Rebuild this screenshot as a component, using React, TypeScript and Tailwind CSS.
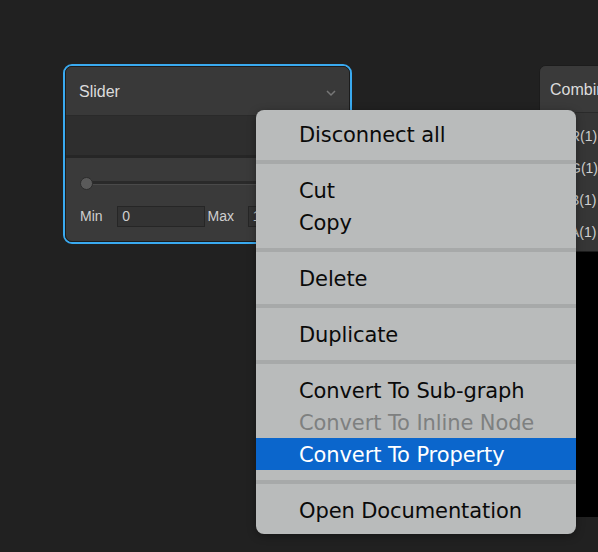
import React from 'react';

type MenuItem = { label: string; disabled?: boolean; active?: boolean };

const groups: MenuItem[][] = [
  [{ label: 'Disconnect all' }],
  [{ label: 'Cut' }, { label: 'Copy' }],
  [{ label: 'Delete' }],
  [{ label: 'Duplicate' }],
  [
    { label: 'Convert To Sub-graph' },
    { label: 'Convert To Inline Node', disabled: true },
    { label: 'Convert To Property', active: true },
  ],
  [{ label: 'Open Documentation' }],
];

const SliderNode: React.FC = () => (
  <div className="absolute left-[63px] top-[64px] w-[289px] h-[180px] rounded-[9px] border-2 border-[#3aaaf0]">
    <div className="w-full h-full rounded-[7px] border border-[#1c1c1c] bg-[#3a3a3a] overflow-hidden flex flex-col">
      <div className="h-[49px] bg-[#393939] flex items-center justify-between pl-[13px] pr-[12px] border-b border-[#2a2a2a]">
        <span className="text-[16px] text-[#dcdcdc] mt-[2px]">Slider</span>
        <svg width="12" height="8" viewBox="0 0 12 8" className="mt-[3px]">
          <path d="M2 2 L6 6 L10 2" fill="none" stroke="#777" strokeWidth="1.5" />
        </svg>
      </div>
      <div className="h-[42px] bg-[#2e2e2e] border-b-[3px] border-[#262626]" />
      <div className="flex-1 flex flex-col px-[14px] pt-[19px]">
        <div className="relative h-[12px] flex items-center">
          <div className="flex-1 h-[4px] bg-[#2a2a2a] border-b border-[#4a4a4a] ml-[4px]" />
          <div className="absolute left-0 top-0 w-[13px] h-[13px] rounded-full bg-[#5a5a5a] border border-[#2c2c2c]" />
        </div>
        <div className="flex items-center mt-[17px] text-[14px] text-[#cfcfcf]">
          <span className="w-[38px]">Min</span>
          <div className="w-[89px] h-[21px] bg-[#333333] border border-[#262626] px-[4px] flex items-center">0</div>
          <span className="ml-[3px] w-[41px]">Max</span>
          <div className="w-[89px] h-[21px] bg-[#333333] border border-[#262626] px-[4px] flex items-center">1</div>
        </div>
      </div>
    </div>
  </div>
);

const CombineNode: React.FC = () => (
  <div className="absolute left-[539px] top-[65px] w-[120px] h-[187px] rounded-[7px] border border-[#1c1c1c] bg-[#363636] overflow-hidden flex flex-col">
    <div className="h-[47px] bg-[#3a3a3a] flex items-center pl-[10px] border-b border-[#2a2a2a]">
      <span className="text-[16px] text-[#dcdcdc] mt-[2px]">Combine</span>
    </div>
    <div className="flex flex-col pt-[7px] text-[14px] text-[#cfcfcf]">
      {['R(1)', 'G(1)', 'B(1)', 'A(1)'].map(r => (
        <div key={r} className="h-[32px] flex items-center pl-[30px]">{r}</div>
      ))}
    </div>
  </div>
);

const ContextMenu: React.FC = () => (
  <div
    className="absolute left-[256px] top-[110px] w-[320px] rounded-[8px] bg-[#b9bbbb] py-[8px] shadow-[0_2px_8px_rgba(0,0,0,0.35)] text-[21px] leading-[34px] text-[#0a0a0a]"
    style={{ fontFamily: '"DejaVu Sans", sans-serif' }}
  >
    {groups.map((g, gi) => (
      <React.Fragment key={gi}>
        {gi > 0 && <div className="h-[4px] bg-[#a7a9a9] my-[10px]" />}
        {g.map(item => (
          <div
            key={item.label}
            className={`h-[32px] pl-[43px] whitespace-nowrap tracking-[-0.1px] ${
              item.active ? 'bg-[#0b66cc] text-white' : item.disabled ? 'text-[#7e8080]' : ''
            }`}
          >
            {item.label}
          </div>
        ))}
      </React.Fragment>
    ))}
  </div>
);

export default function App() {
  return (
    <div
      className="relative w-[598px] h-[552px] bg-[#212121] overflow-hidden"
      style={{ fontFamily: '"Liberation Sans", Arial, sans-serif' }}
    >
      <SliderNode />
      <CombineNode />
      <div className="absolute left-[556px] top-[252px] w-[42px] h-[265px] bg-black" />
      <ContextMenu />
    </div>
  );
}
